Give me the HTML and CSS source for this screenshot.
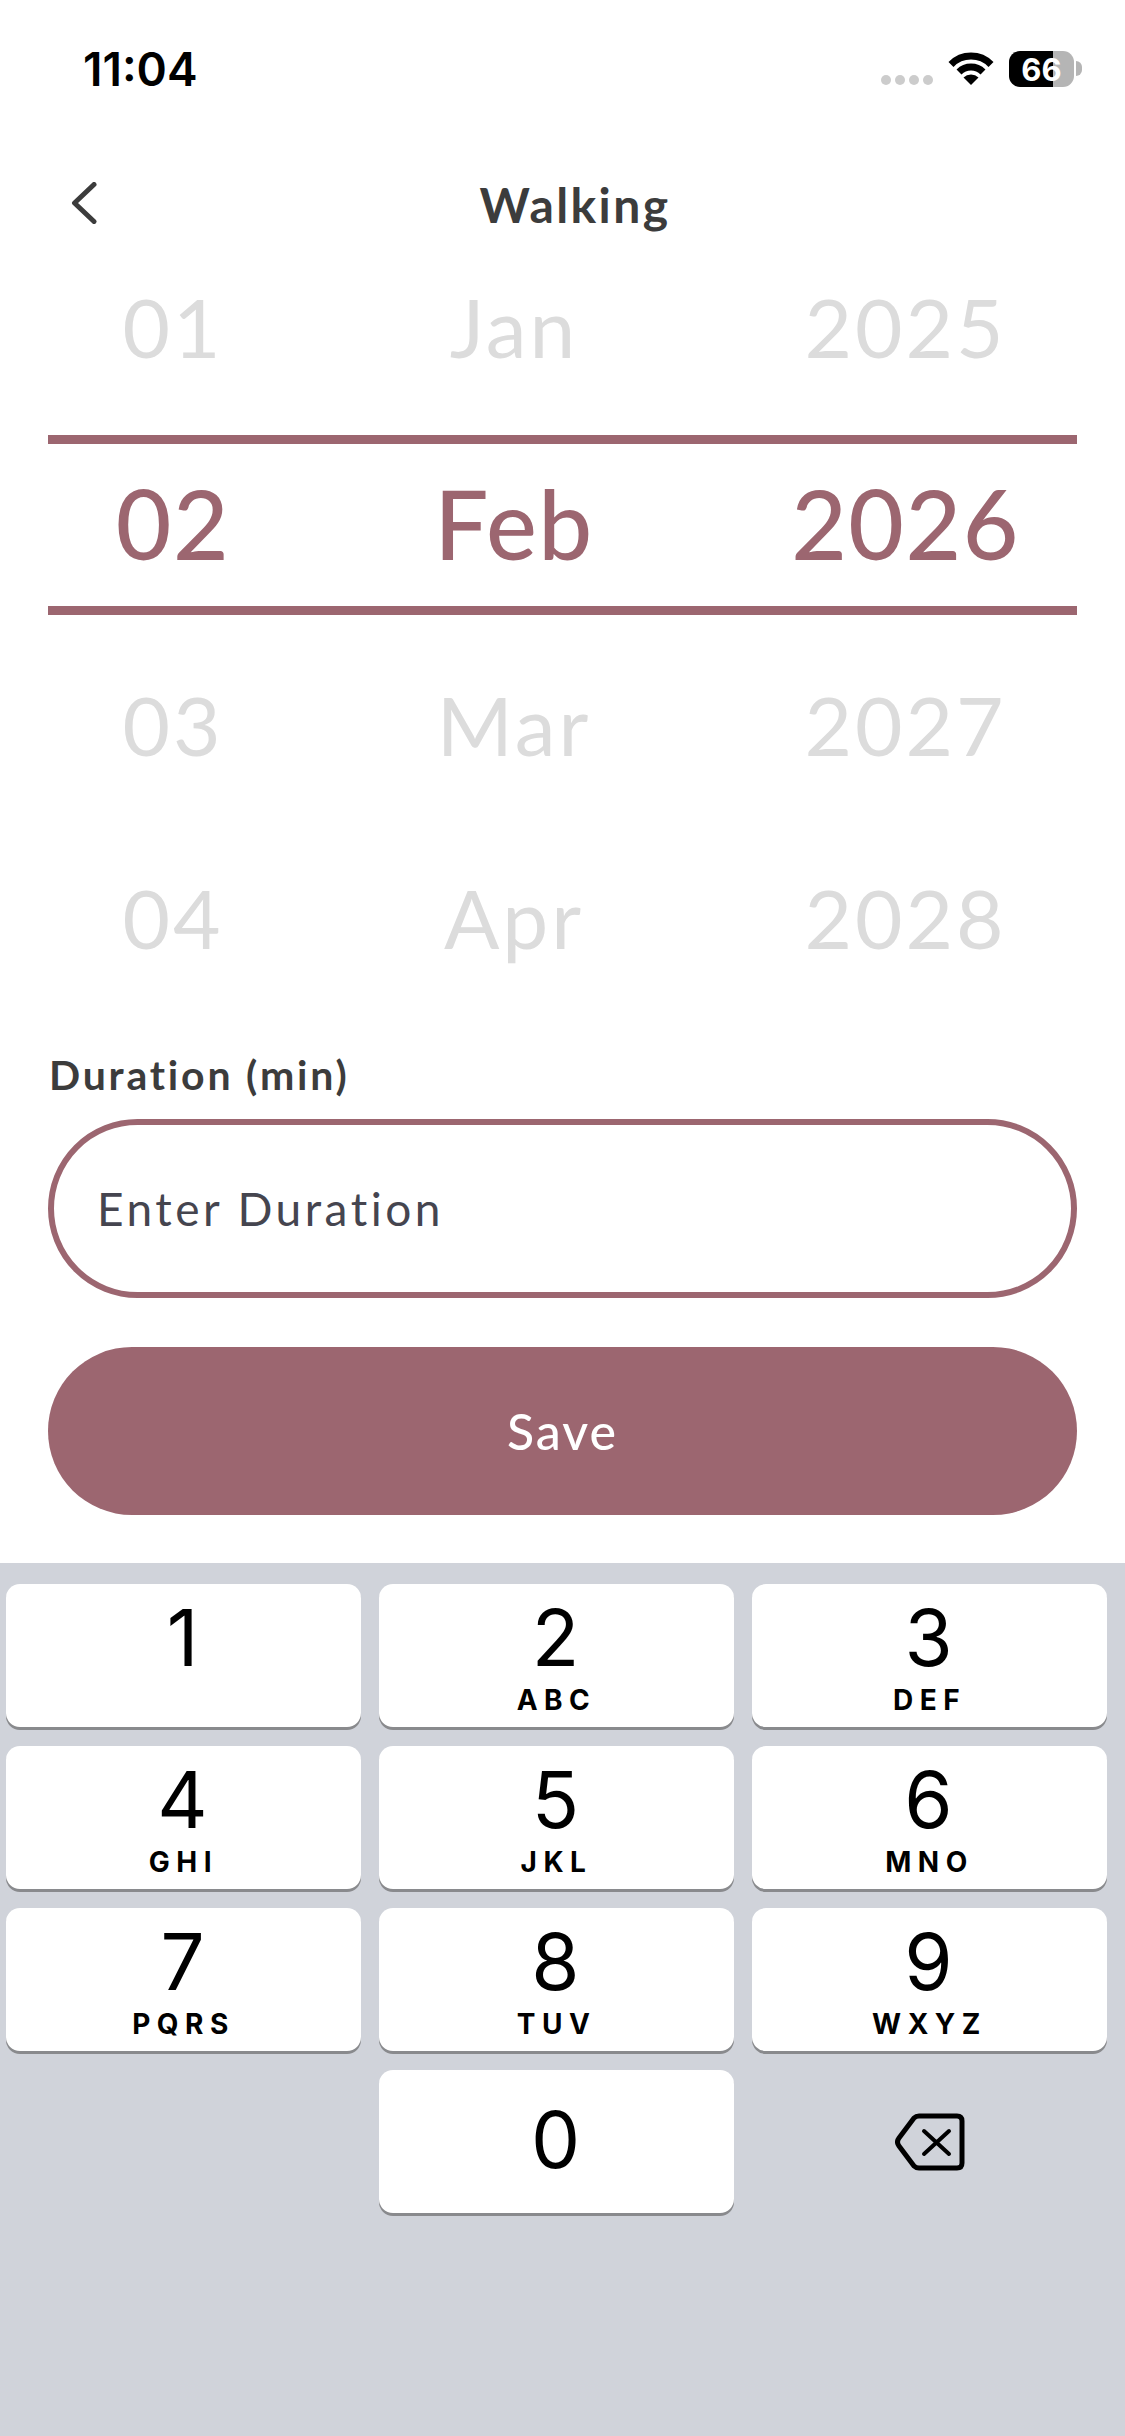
FILE: index.html
```html
<!DOCTYPE html>
<html lang="en">
<head>
    <meta charset="UTF-8">
    <meta name="viewport" content="width=device-width, initial-scale=1.0">
    <title>Walking</title>
    <link rel="stylesheet" href="styles.css">
</head>
<body>
  <div class="status-bar">
    <span class="time">11:04</span>
    <div class="status-icons">
      <div class="signal">
        <span></span><span></span><span></span><span></span>
      </div>
      <svg class="wifi" viewBox="0 0 46 33" width="46" height="33">
        <path d="M3 12.5A28 28 0 0 1 43 12.5" fill="none" stroke="#000" stroke-width="7"/>
        <path d="M11 20A17 17 0 0 1 35 20" fill="none" stroke="#000" stroke-width="7"/>
        <path d="M23 33L15.5 25.5A11 11 0 0 1 30.5 25.5Z" fill="#000"/>
      </svg>
      <div class="battery"><span>66</span></div>
      <div class="battery-cap"></div>
    </div>
  </div>

  <div class="nav">
    <svg class="back" viewBox="0 0 26 42" width="26" height="42">
      <path d="M23 2.5L3.5 21L23 39.5" fill="none" stroke="#3c3c3c" stroke-width="5" stroke-linecap="round" stroke-linejoin="round"/>
    </svg>
    <div class="nav-title">Walking</div>
  </div>

  <div class="wheel">
    <div class="wheel-row row-first"><span>01</span><span>Jan</span><span>2025</span></div>
    <div class="wheel-row selected"><span>02</span><span>Feb</span><span>2026</span></div>
    <div class="wheel-row row-third"><span>03</span><span>Mar</span><span>2027</span></div>
    <div class="wheel-row row-fourth"><span>04</span><span>Apr</span><span>2028</span></div>
  </div>

  <div class="form">
    <div class="label">Duration (min)</div>
    <div class="input">Enter Duration</div>
    <div class="save">Save</div>
  </div>

  <div class="keyboard">
    <div class="key"><span class="digit">1</span><span class="letters"></span></div>
    <div class="key"><span class="digit">2</span><span class="letters">ABC</span></div>
    <div class="key"><span class="digit">3</span><span class="letters">DEF</span></div>
    <div class="key"><span class="digit">4</span><span class="letters">GHI</span></div>
    <div class="key"><span class="digit">5</span><span class="letters">JKL</span></div>
    <div class="key"><span class="digit">6</span><span class="letters">MNO</span></div>
    <div class="key"><span class="digit">7</span><span class="letters">PQRS</span></div>
    <div class="key"><span class="digit">8</span><span class="letters">TUV</span></div>
    <div class="key"><span class="digit">9</span><span class="letters">WXYZ</span></div>
    <div class="key-empty"></div>
    <div class="key key-zero"><span class="digit">0</span></div>
    <div class="key-empty key-delete">
      <svg viewBox="0 0 70 58" width="70" height="58">
        <path d="M24 3H62Q67 3 67 8V50Q67 55 62 55H24Q21 55 19 53L4 33Q1 29 4 25L19 5Q21 3 24 3Z" fill="none" stroke="#000" stroke-width="5" stroke-linejoin="round"/>
        <path d="M29 18L54 41M54 18L29 41" fill="none" stroke="#000" stroke-width="4" stroke-linecap="round"/>
      </svg>
    </div>
  </div>
</body>
</html>
```

FILE: styles.css
```css
* {
    margin: 0;
    padding: 0;
    box-sizing: border-box;
}

body {
    width: 1125px;
    height: 2436px;
    overflow: hidden;
    background: #ffffff;
    font-family: 'Lato', 'Noto Sans', sans-serif;
    color: #3c3c3c;
    display: flex;
    flex-direction: column;
}

/* Status bar */
.status-bar {
    height: 136px;
    padding: 44px 43px 0 83px;
    display: flex;
    justify-content: space-between;
    align-items: flex-start;
}

.time {
    font-family: 'Inter', sans-serif;
    font-size: 46px;
    font-weight: 600;
    line-height: 50px;
    color: #000000;
}

.status-icons {
    display: flex;
    align-items: flex-start;
    padding-top: 7px;
}

.signal {
    display: flex;
    gap: 4px;
    margin-top: 24px;
    margin-right: 15px;
}

.signal span {
    width: 10px;
    height: 10px;
    border-radius: 50%;
    background: #cccccc;
}

.wifi {
    margin-top: 1px;
    margin-right: 15px;
}

.battery {
    position: relative;
    width: 65px;
    height: 36px;
    border-radius: 11px;
    background: linear-gradient(90deg, #000000 0, #000000 44px, #b5b5b5 44px);
    display: flex;
    align-items: center;
    justify-content: center;
    font-family: 'Inter', sans-serif;
    font-size: 31px;
    font-weight: 700;
    color: #ffffff;
}

.battery-cap {
    width: 6px;
    height: 15px;
    margin-top: 10px;
    margin-left: 2px;
    background: #b5b5b5;
    border-radius: 0 8px 8px 0;
}

/* Nav */
.nav {
    position: relative;
    height: 89px;
    padding-left: 71px;
    padding-top: 46px;
}

.back {
    display: block;
}

.nav-title {
    position: absolute;
    left: 0;
    top: 40px;
    width: 1150px;
    text-align: center;
    font-size: 48px;
    font-weight: 700;
    letter-spacing: 2.4px;
    line-height: 58px;
}

/* Date wheel */
.wheel {
    padding: 0 48px;
}

.wheel-row {
    display: grid;
    grid-template-columns: 246px 436px 347px;
    align-items: center;
    text-align: center;
    text-indent: 4px;
    font-size: 82px;
    letter-spacing: 3px;
    color: #dcdcdc;
    padding-bottom: 8px;
}

.row-first {
    height: 210px;
}

.selected {
    height: 180px;
    border-top: 9px solid #9c6670;
    border-bottom: 9px solid #9c6670;
    font-size: 96px;
    font-weight: 500;
    letter-spacing: 1.5px;
    color: #9c6670;
    padding-bottom: 5px;
}

.row-third {
    height: 226px;
}

.row-fourth {
    height: 162px;
    padding-bottom: 10px;
}

/* Form */
.form {
    padding: 47px 48px 0;
    display: flex;
    flex-direction: column;
}

.label {
    font-size: 41px;
    font-weight: 700;
    letter-spacing: 2.8px;
    line-height: 50px;
    padding-left: 1px;
    margin-bottom: 19px;
}

.input {
    height: 179px;
    border: 6px solid #9c6670;
    border-radius: 90px;
    padding-left: 43px;
    display: flex;
    align-items: center;
    font-size: 46px;
    letter-spacing: 3.5px;
    color: #45454f;
}

.save {
    margin-top: 49px;
    height: 168px;
    border-radius: 84px;
    background: #9c6670;
    color: #ffffff;
    display: flex;
    align-items: center;
    justify-content: center;
    font-size: 50px;
    font-weight: 500;
    letter-spacing: 2px;
}

/* Keyboard */
.keyboard {
    position: absolute;
    left: 0;
    right: 0;
    bottom: 0;
    height: 873px;
    background: #d0d3da;
    padding: 21px 18px 0 6px;
    display: grid;
    grid-template-columns: repeat(3, 355px);
    grid-auto-rows: 143px;
    column-gap: 18px;
    row-gap: 19px;
    align-content: start;
}

.key {
    background: #ffffff;
    border-radius: 14px;
    box-shadow: 0 3px 0 #898a8d;
    display: flex;
    flex-direction: column;
    align-items: center;
    color: #000000;
}

.digit {
    font-family: 'Inter', sans-serif;
    font-size: 78px;
    line-height: 82px;
    margin-top: 13px;
    margin-left: -2px;
}

.letters {
    font-family: 'Inter', sans-serif;
    font-size: 28px;
    font-weight: 700;
    letter-spacing: 6.5px;
    line-height: 32px;
    margin-top: 5px;
}

.key-zero {
    justify-content: center;
}

.key-zero .digit {
    margin-top: 0;
    margin-bottom: 3px;
}

.key-delete {
    display: flex;
    align-items: center;
    justify-content: center;
}
```
